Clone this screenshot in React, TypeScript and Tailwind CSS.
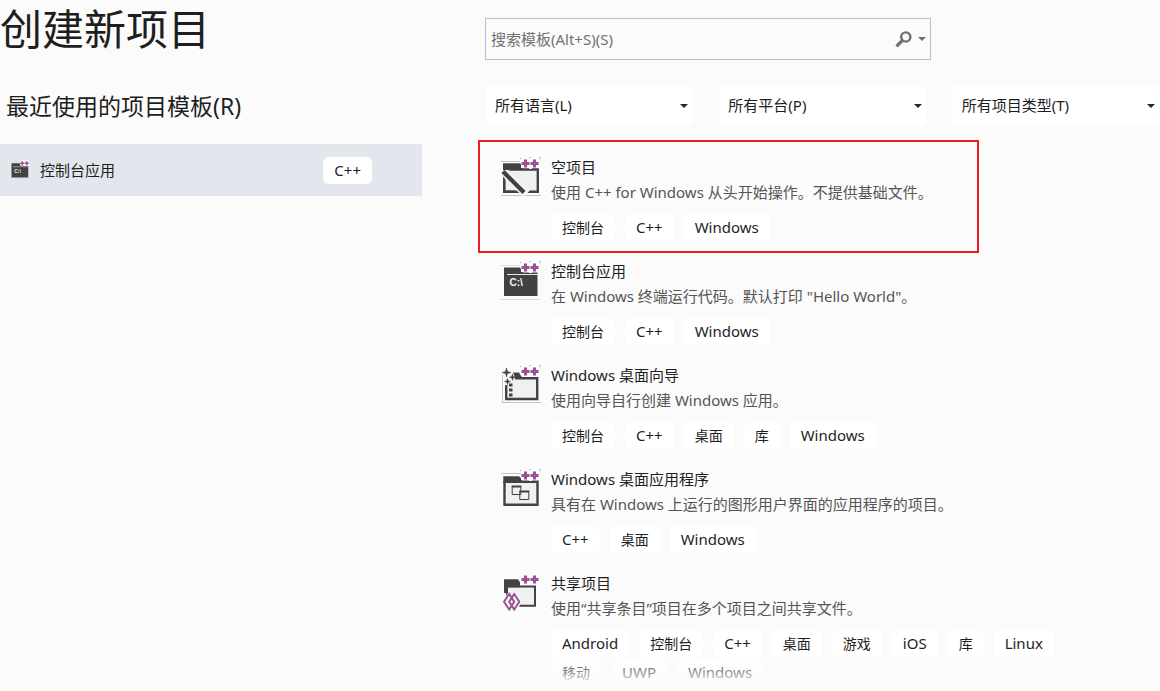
import { useState } from "react";
import type { ReactNode } from "react";
import clsx from "clsx";

type IconName = "empty" | "console" | "wizard" | "desktop" | "shared";

interface Template {
  name: string;
  description: string;
  icon: IconName;
  tags: string[];
}

const templates: Template[] = [
  {
    name: "空项目",
    description: "使用 C++ for Windows 从头开始操作。不提供基础文件。",
    icon: "empty",
    tags: ["控制台", "C++", "Windows"],
  },
  {
    name: "控制台应用",
    description: '在 Windows 终端运行代码。默认打印 "Hello World"。',
    icon: "console",
    tags: ["控制台", "C++", "Windows"],
  },
  {
    name: "Windows 桌面向导",
    description: "使用向导自行创建 Windows 应用。",
    icon: "wizard",
    tags: ["控制台", "C++", "桌面", "库", "Windows"],
  },
  {
    name: "Windows 桌面应用程序",
    description: "具有在 Windows 上运行的图形用户界面的应用程序的项目。",
    icon: "desktop",
    tags: ["C++", "桌面", "Windows"],
  },
  {
    name: "共享项目",
    description: "使用“共享条目”项目在多个项目之间共享文件。",
    icon: "shared",
    tags: ["Android", "控制台", "C++", "桌面", "游戏", "iOS", "库", "Linux", "移动", "UWP", "Windows"],
  },
];

const filters = ["所有语言(L)", "所有平台(P)", "所有项目类型(T)"];

const iconBodies: Record<IconName, ReactNode> = {
  empty: (
    <>
      <path d="M0 4.5h19M0 38.5h40" stroke="#c4c4c4" />
      <path d="M3.2 12v22.8h33.6V12.5H3.2" fill="#f0f0f0" stroke="#424242" strokeWidth="2.4" />
      <path d="M2 6.500h17l3 3v3.500H2z" fill="#424242" />
      <path d="M2 13.500L25.500 37" stroke="#f5f5f5" strokeWidth="9" />
      <path d="M2 6.500h17l3 3v3.500H2z" fill="#424242" />
      <path d="M2 14.500L23 35.500" stroke="#424242" strokeWidth="4.400" />
      <path d="M3.200 24v10.800H14" stroke="#424242" strokeWidth="2.400" />
    </>
  ),
  console: (
    <>
      <path d="M0 4.5h19M0 38.5h38" stroke="#dcdcdc" />
      <path d="M3 6.5h16l3 5h14.5V35H3z" fill="#424242" />
      <path d="M6 13.5h31" stroke="#e8e8e8" />
      <text x="8.5" y="25" fill="#f4f4f4" fontSize="10" fontWeight="700" fontFamily="Liberation Sans, sans-serif">
        C:\
      </text>
    </>
  ),
  wizard: (
    <>
      <path d="M1.5 10v27.500H40" stroke="#c4c4c4" fill="none" />
      <path d="M5.2 20v14h31V13.3H14" fill="#f0f0f0" stroke="#424242" strokeWidth="2.4" />
      <path d="M12 7.500h6l3 5h-7z" fill="#424242" />
      <path
        d="M5.5 3l1 3.500L10 7.500 6.500 8.500l-1 3.500-1-3.500L1 7.500l3.500-1zM11.500 9l.8 2.400 2.400.8-2.400.8-.8 2.400-.8-2.400-2.400-.8 2.400-.8zM6.500 13.500l.8 2.200 2.200.8-2.200.8-.8 2.200-.8-2.200-2.200-.8 2.200-.8z"
        fill="#424242"
        stroke="#424242"
        strokeWidth=".5"
      />
      <path d="M8 18.500h3.500v3H8zM8 23.500h3.500v3H8zM8 28.500h3.500v3H8z" fill="#424242" />
    </>
  ),
  desktop: (
    <>
      <path d="M0 4.5h20" stroke="#c4c4c4" />
      <path d="M3.500 12v23.700h33V12.700H3.500" fill="#f0f0f0" stroke="#424242" strokeWidth="2.400" />
      <path d="M2.300 7.200h15.700l3 3v3.800H2.300z" fill="#424242" />
      <path d="M11.200 17.500h8.600v8h-8.600zM18.800 22.500h9v8h-9z" fill="#f0f0f0" stroke="#424242" />
      <path d="M10.700 17.500h9.600M18.300 22.500h10" stroke="#424242" strokeWidth="2" />
    </>
  ),
  shared: (
    <>
      <path d="M6 12v20.700h28V13.500H6" fill="#f0f0f0" stroke="#424242" strokeWidth="2" />
      <path d="M3 6.200h14l2 3v5H6V20H3z" fill="#424242" />
      <path d="M1 28.500l7-10h6l7 10-5 9H6z" fill="#fbfbfb" />
      <path
        d="M8.200 21L3 28.800 8.200 36.500 13.200 28.800zM13.200 21L8.200 28.800 13.200 36.500 18.300 28.800z"
        fill="none"
        stroke="#9b4f96"
        strokeWidth="2"
      />
    </>
  ),
};

function TemplateIcon({ name, className }: { name: IconName; className: string }) {
  return (
    <svg viewBox="0 0 40 40" className={className} fill="none" aria-hidden="true">
      {iconBodies[name]}
      <path d="M20 .5h19v10.500h-8v1h-3v-1h-8z" fill="#fbfbfb" />
      {name !== "shared" && <path d="M19 1.500h2M28 .5h2M38 .5h1.500v2" stroke="#c4c4c4" />}
      <path d="M24.500 2.500v8M20.500 6.500h8M33.500 2.500v8M29.500 6.500h8" stroke="#9b4f96" strokeWidth="3" />
    </svg>
  );
}

function Tag({ label }: { label: string }) {
  const isLatin = /^[A-Za-z+]+$/.test(label);

  return (
    <span
      className={clsx(
        "rounded-md bg-white px-[11px] leading-[27px] whitespace-nowrap text-[#1e1e1e]",
        isLatin ? "text-[15px]" : "text-[14px]"
      )}
    >
      {label}
    </span>
  );
}

function Caret({ className }: { className: string }) {
  return (
    <svg viewBox="0 0 8 4" className={className} aria-hidden="true">
      <path d="M0 0h8L4 4z" fill="currentColor" />
    </svg>
  );
}

function RecentTemplates() {
  return (
    <section>
      <h1 className="text-[42px] leading-[58px] whitespace-nowrap">创建新项目</h1>
      <h2 className="mt-8 pl-1.5 text-[23px] leading-8">最近使用的项目模板(R)</h2>
      <button type="button" className="mt-[22px] flex h-[52px] w-full items-center bg-[#e3e6ed] pr-[50px] pl-2.5 text-left">
        <TemplateIcon name="console" className="size-5" />
        <span className="ml-2.5 flex-1 text-[15px]">控制台应用</span>
        <Tag label="C++" />
      </button>
    </section>
  );
}

function SearchBox() {
  const [query, setQuery] = useState("");

  return (
    <div className="mt-[18px] ml-[7px] flex h-[42px] max-w-[446px] items-center border border-[#b9c1d0] pr-1">
      <input
        type="text"
        aria-label="搜索模板"
        placeholder="搜索模板(Alt+S)(S)"
        value={query}
        onChange={(e) => setQuery(e.target.value)}
        className="h-full min-w-0 flex-1 bg-transparent px-[5px] text-[15px] outline-none placeholder:text-[#717171]"
      />
      <button type="button" aria-label="搜索" className="flex items-center gap-1.5 text-[#717171]">
        <svg viewBox="0 0 17 17" className="size-[17px]" fill="none" stroke="currentColor" aria-hidden="true">
          <circle cx="10.8" cy="6" r="4.6" strokeWidth="2.4" />
          <path d="M7.8 9L1.500 15.300" strokeWidth="3.2" />
        </svg>
        <Caret className="h-1 w-2" />
      </button>
    </div>
  );
}

function FilterBar() {
  return (
    <div className="mt-[26px] flex gap-[27px] pr-px pl-2">
      {filters.map((label) => (
        <div key={label} className="relative flex-1">
          <select
            aria-label={label}
            className="h-[39px] w-full appearance-none rounded-sm bg-white pr-6 pl-[9px] text-[15px] text-[#1e1e1e]"
          >
            <option>{label}</option>
          </select>
          <Caret className="pointer-events-none absolute top-[18px] right-1 h-1 w-2 text-[#1b293e]" />
        </div>
      ))}
    </div>
  );
}

function TemplateRow({ template, highlighted }: { template: Template; highlighted: boolean }) {
  return (
    <li
      className={
        highlighted
          ? "-mb-3 flex max-w-[501px] gap-2.5 border-2 border-[#ed1c24] pt-[13px] pb-2.5 pl-[21px]"
          : "flex gap-2.5 pl-[23px]"
      }
    >
      <TemplateIcon name={template.icon} className="mt-0.5 size-10 shrink-0" />
      <div className="min-w-0">
        <h3 className="text-[15px] leading-[25px]">{template.name}</h3>
        <p className="text-[15px] leading-[25px] text-[#555555]">{template.description}</p>
        <div className="mt-[9px] flex flex-wrap gap-x-2.5 gap-y-0.5">
          {template.tags.map((tag) => (
            <Tag key={tag} label={tag} />
          ))}
        </div>
      </div>
    </li>
  );
}

export default function App() {
  return (
    <main className="grid min-h-screen grid-cols-[422fr_682fr] gap-x-14 bg-[#fbfbfb] font-['Noto_Sans','Noto_Sans_CJK_SC',sans-serif] text-[#1e1e1e]">
      <RecentTemplates />
      <section className="min-w-0">
        <SearchBox />
        <FilterBar />
        <div className="relative mt-[15px]">
          <ul className="flex flex-col gap-[18px] pr-16">
            {templates.map((template, i) => (
              <TemplateRow key={template.name} template={template} highlighted={i === 0} />
            ))}
          </ul>
          {/* fades out the last row of tags */}
          <div className="pointer-events-none absolute inset-x-0 bottom-0 h-7 bg-linear-to-b from-[#fbfbfb]/20 via-[#fbfbfb]/50 to-[#fbfbfb]" />
        </div>
      </section>
    </main>
  );
}
